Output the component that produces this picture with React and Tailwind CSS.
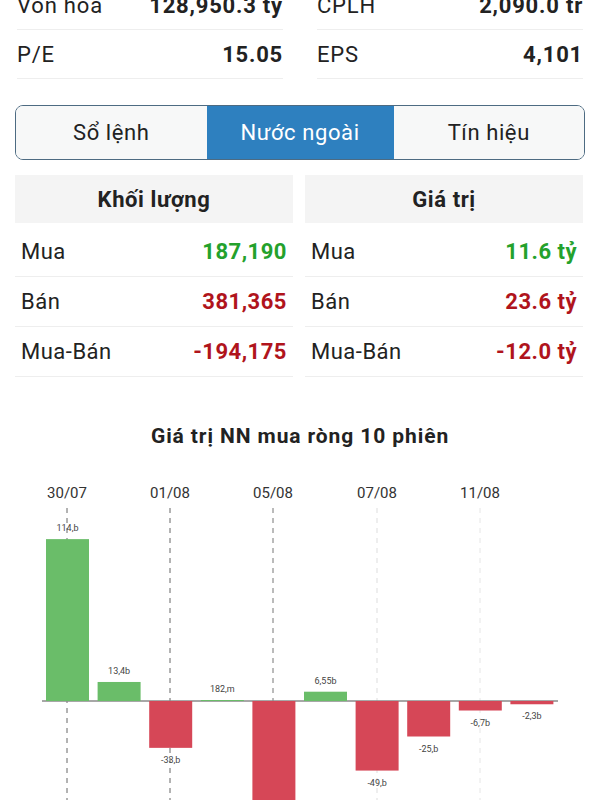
import React from 'react'

const font = { fontFamily: 'Roboto, "Noto Sans", sans-serif' }

const bars = [
  { v: 114, label: '114,b' },
  { v: 13.4, label: '13,4b' },
  { v: -33, label: '-33,b' },
  { v: 0.182, label: '182,m' },
  { v: -90, label: '' },
  { v: 6.55, label: '6,55b' },
  { v: -49, label: '-49,b' },
  { v: -25, label: '-25,b' },
  { v: -6.7, label: '-6,7b' },
  { v: -2.3, label: '-2,3b' }
]

const dates = [
  { x: 67, t: '30/07', c: '#666' },
  { x: 170, t: '01/08', c: '#666' },
  { x: 273, t: '05/08', c: '#777' },
  { x: 377, t: '07/08', c: '#ddd' },
  { x: 480, t: '11/08', c: '#e6e6e6' }
]

function InfoRow({ label, value }) {
  return (
    <div className="flex items-center justify-between h-[49px] border-b border-[#eeeeee] text-[22px] tracking-[0.8px] text-[#222]">
      <span>{label}</span>
      <span className="font-bold">{value}</span>
    </div>
  )
}

function TableCol({ title, rows }) {
  return (
    <div className="flex flex-col">
      <div className="h-[48px] mb-[4px] bg-[#f4f4f4] flex items-center justify-center text-[22px] tracking-[0.6px] font-bold text-[#222]">
        {title}
      </div>
      {rows.map((r) => (
        <div
          key={r.label}
          className="flex items-center justify-between h-[50px] px-[6px] border-b border-[#eeeeee] text-[22px] tracking-[0.5px]"
        >
          <span className="text-[#222]">{r.label}</span>
          <span className={`font-bold ${r.up ? 'text-[#24a12c]' : 'text-[#b0141c]'}`}>
            {r.value}
          </span>
        </div>
      ))}
    </div>
  )
}

function Chart() {
  // zero line sits at y=241 inside this svg (page y 701)
  const zero = 241
  const k = 1.42
  return (
    <svg width="600" height="340" className="block">
      {dates.map((d) => (
        <g key={d.t}>
          <text x={d.x} y={38} textAnchor="middle" fontSize="15" fill="#333" style={font}>
            {d.t}
          </text>
          <line x1={d.x} y1={48} x2={d.x} y2={340} stroke={d.c} strokeWidth="1" strokeDasharray="5 5" />
        </g>
      ))}
      <line x1="42" y1={zero} x2="558" y2={zero} stroke="#8a8a8a" strokeWidth="1.5" />
      {bars.map((b, i) => {
        const x = 46 + i * 51.6
        const h = Math.max(Math.abs(b.v) * k, 1)
        const up = b.v >= 0
        const y = up ? zero - h : zero
        const ly = up ? zero - h - 8 : zero + h + 15
        return (
          <g key={i}>
            <rect x={x} y={y} width="43" height={h} fill={up ? '#6abd69' : '#d64757'} />
            {b.label && (
              <text x={x + 21.5} y={ly} textAnchor="middle" fontSize="9" fill="#444" style={font}>
                {b.label}
              </text>
            )}
          </g>
        )
      })}
    </svg>
  )
}

export default function App() {
  return (
    <div className="w-[600px] h-[800px] overflow-hidden bg-white" style={font}>
      {/* Thong tin co ban */}
      <div className="grid grid-cols-[266px_266px] gap-x-[34px] pl-[17px] mt-[-19px]">
        <InfoRow label="Vốn hóa" value="128,950.3 tỷ" />
        <InfoRow label="CPLH" value="2,090.0 tr" />
        <InfoRow label="P/E" value="15.05" />
        <InfoRow label="EPS" value="4,101" />
      </div>

      {/* Tabs */}
      <div className="mx-[15px] mt-[26px] h-[55px] flex rounded-[8px] border-[1.5px] border-[#4d6b82] overflow-hidden text-[22px] tracking-[0.6px]">
        <div className="flex-1 flex items-center justify-center bg-[#f7f8f8] text-[#222]">Sổ lệnh</div>
        <div className="w-[187px] flex items-center justify-center bg-[#2e80bf] text-white">Nước ngoài</div>
        <div className="flex-1 flex items-center justify-center bg-[#f7f8f8] text-[#222]">Tín hiệu</div>
      </div>

      {/* Khoi ngoai */}
      <div className="grid grid-cols-[278px_278px] gap-x-[12px] mx-[15px] mt-[15px]">
        <TableCol
          title="Khối lượng"
          rows={[
            { label: 'Mua', value: '187,190', up: true },
            { label: 'Bán', value: '381,365' },
            { label: 'Mua-Bán', value: '-194,175' }
          ]}
        />
        <TableCol
          title="Giá trị"
          rows={[
            { label: 'Mua', value: '11.6 tỷ', up: true },
            { label: 'Bán', value: '23.6 tỷ' },
            { label: 'Mua-Bán', value: '-12.0 tỷ' }
          ]}
        />
      </div>

      {/* Bieu do */}
      <div className="mt-[44px] text-center text-[21px] tracking-[0.9px] font-bold text-[#222]">
        Giá trị NN mua ròng 10 phiên
      </div>
      <div className="mt-[7px]">
        <Chart />
      </div>
    </div>
  )
}
